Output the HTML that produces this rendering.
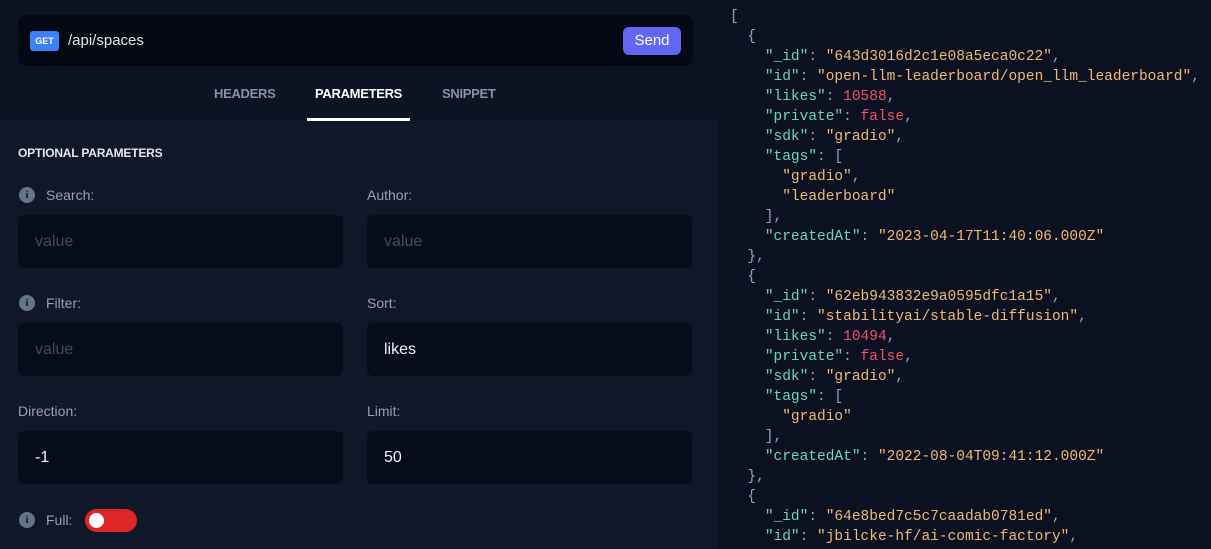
<!DOCTYPE html>
<html><head><style>
*{margin:0;padding:0;box-sizing:border-box}
body{width:1211px;height:549px;overflow:hidden;background:#0b1120;font-family:"Liberation Sans",sans-serif;position:relative}
.left{position:absolute;left:0;top:0;width:717px;height:549px;background:#0c1322}
.lower{position:absolute;left:0;top:121px;width:717px;height:428px;background:#0f1729}
.url{position:absolute;left:18px;top:15px;width:675px;height:51px;background:#050913;border-radius:8px}
.get{position:absolute;left:30px;top:31px;width:29px;height:20px;background:#3b82f6;border-radius:3px;color:#fff;font-size:9px;font-weight:bold;text-align:center;line-height:20px}
.path{position:absolute;left:68px;top:32px;color:#e2e8f0;font-size:15px}
.send{position:absolute;left:623px;top:27px;width:58px;height:28px;background:#6366f1;border-radius:6px;color:#fff;font-size:15px;text-align:center;line-height:28px}
.tab{position:absolute;top:86px;font-size:13px;font-weight:bold;color:#8892a6;letter-spacing:-0.3px}
.ul{position:absolute;left:307px;top:118px;width:103px;height:3px;background:#fff}
.opt{position:absolute;left:18px;top:146px;font-size:12px;font-weight:bold;color:#e2e8f0;letter-spacing:-0.2px}
.lab{position:absolute;font-size:14px;color:#94a3b8;display:flex;align-items:center;height:16px}
.info{display:inline-block;width:16px;height:16px;border-radius:50%;background:#64748b;color:#0f1729;font-size:11px;font-weight:bold;text-align:center;line-height:16px;font-family:"Liberation Serif",serif;margin-right:11px}
.inp{position:absolute;width:325px;height:53px;background:#070c1b;border-radius:6px;font-size:16px;line-height:53px;padding-left:17px;color:#f1f5f9}
.ph{color:#414b5e}
.tog{position:absolute;left:85px;top:509px;width:52px;height:23px;background:#dc2626;border-radius:12px}
.tog i{position:absolute;left:4px;top:4px;width:15px;height:15px;background:#fff;border-radius:50%}
pre{position:absolute;left:730px;top:7px;font-family:"Liberation Mono",monospace;font-size:14.5px;line-height:20px;color:#94a3b8}
.k{color:#6fd3c3}.s{color:#f2b878}.n{color:#f0506e}
</style></head><body>
<div class="left"></div><div class="lower"></div>
<div class="url"></div><div class="get">GET</div><div class="path">/api/spaces</div><div class="send">Send</div>
<div class="tab" style="left:214px">HEADERS</div>
<div class="tab" style="left:315px;color:#fff">PARAMETERS</div>
<div class="tab" style="left:442px">SNIPPET</div>
<div class="ul"></div>
<div class="opt">OPTIONAL PARAMETERS</div>
<div class="lab" style="left:19px;top:187px"><span class="info">i</span>Search:</div>
<div class="lab" style="left:367px;top:187px">Author:</div>
<div class="inp" style="left:18px;top:215px"><span class="ph">value</span></div>
<div class="inp" style="left:367px;top:215px"><span class="ph">value</span></div>
<div class="lab" style="left:19px;top:295px"><span class="info">i</span>Filter:</div>
<div class="lab" style="left:367px;top:295px">Sort:</div>
<div class="inp" style="left:18px;top:323px"><span class="ph">value</span></div>
<div class="inp" style="left:367px;top:323px">likes</div>
<div class="lab" style="left:18px;top:403px">Direction:</div>
<div class="lab" style="left:367px;top:403px">Limit:</div>
<div class="inp" style="left:18px;top:431px">-1</div>
<div class="inp" style="left:367px;top:431px">50</div>
<div class="lab" style="left:19px;top:512px"><span class="info">i</span>Full:</div>
<div class="tog"><i></i></div>
<pre>[
  {
    <span class="k">"_id"</span>: <span class="s">"643d3016d2c1e08a5eca0c22"</span>,
    <span class="k">"id"</span>: <span class="s">"open-llm-leaderboard/open_llm_leaderboard"</span>,
    <span class="k">"likes"</span>: <span class="n">10588</span>,
    <span class="k">"private"</span>: <span class="n">false</span>,
    <span class="k">"sdk"</span>: <span class="s">"gradio"</span>,
    <span class="k">"tags"</span>: [
      <span class="s">"gradio"</span>,
      <span class="s">"leaderboard"</span>
    ],
    <span class="k">"createdAt"</span>: <span class="s">"2023-04-17T11:40:06.000Z"</span>
  },
  {
    <span class="k">"_id"</span>: <span class="s">"62eb943832e9a0595dfc1a15"</span>,
    <span class="k">"id"</span>: <span class="s">"stabilityai/stable-diffusion"</span>,
    <span class="k">"likes"</span>: <span class="n">10494</span>,
    <span class="k">"private"</span>: <span class="n">false</span>,
    <span class="k">"sdk"</span>: <span class="s">"gradio"</span>,
    <span class="k">"tags"</span>: [
      <span class="s">"gradio"</span>
    ],
    <span class="k">"createdAt"</span>: <span class="s">"2022-08-04T09:41:12.000Z"</span>
  },
  {
    <span class="k">"_id"</span>: <span class="s">"64e8bed7c5c7caadab0781ed"</span>,
    <span class="k">"id"</span>: <span class="s">"jbilcke-hf/ai-comic-factory"</span>,
</pre>
</body></html>
